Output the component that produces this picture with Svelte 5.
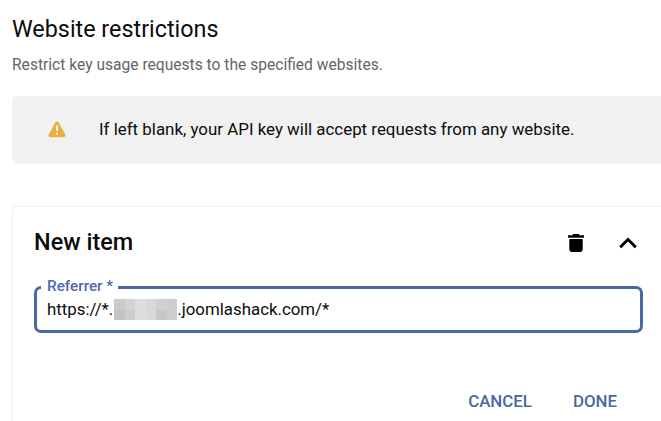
<script>
	/** @type {string[][]} */
	const mosaic = [
		['#cbcbcb', '#d3d3d3', '#dedede', '#d8d8d8', '#d0d0d0', '#cdcdcd'],
		['#c3c3c3', '#cdcdcd', '#dcdcdc', '#d9d9d9', '#c7c7c7', '#cecece']
	];
</script>

<div class="page">
	<h1>Website restrictions</h1>
	<p class="subtitle">Restrict key usage requests to the specified websites.</p>

	<div class="notice">
		<svg class="warning" viewBox="0 0 18 17" width="18" height="17">
			<path d="M7.3 1.4a2 2 0 0 1 3.4 0l6.5 11.8c.8 1.4 0 3-1.6 3H2.4c-1.6 0-2.4-1.6-1.6-3z" fill="#ebae40" />
			<path d="M8 4.5h2v5.5H8zM8 11.8h2v2H8z" fill="#fff8e8" />
		</svg>
		<span>If left blank, your API key will accept requests from any website.</span>
	</div>

	<section class="card">
		<header>
			<h2>New item</h2>
			<button class="icon-button" aria-label="Delete item">
				<svg viewBox="0 0 16 18" width="16" height="18">
					<path d="M0 1.3h4.300L5.300 0h5.400l1 1.300H16v2.500H0zM1.300 5h13.400v10.600a2.400 2.400 0 0 1-2.400 2.400H3.700a2.400 2.400 0 0 1-2.400-2.400z" />
				</svg>
			</button>
			<button class="icon-button" aria-label="Collapse item">
				<svg viewBox="0 0 18 12" width="18" height="12">
					<path d="M1.2 10.3L9 2.5l7.8 7.8" fill="none" stroke="#000" stroke-width="2.8" />
				</svg>
			</button>
		</header>

		<fieldset>
			<legend>Referrer *</legend>
			<div class="value">
				<span>https://*.</span>
				<span class="mosaic">
					{#each mosaic as row}
						{#each row as color}
							<i style:background={color}></i>
						{/each}
					{/each}
				</span>
				<span>.joomlashack.com/*</span>
			</div>
		</fieldset>

		<div class="actions">
			<button>CANCEL</button>
			<button>DONE</button>
		</div>
	</section>
</div>

<style>
	:global(body) {
		background: #fff;
		overflow: hidden;
	}

	.page {
		box-sizing: border-box;
		height: 421px;
		padding: 14px 0 0 12px;
		overflow: hidden;
		font-family: Roboto, sans-serif;
		color: #0c0c0c;
	}

	h1 {
		margin: 0;
		font-size: 23.35px;
		font-weight: 400;
		line-height: 30px;
	}

	.subtitle {
		margin: 10px 0 0;
		font-size: 15.6px;
		line-height: 22px;
		color: #666;
	}

	.notice {
		display: flex;
		align-items: center;
		height: 68px;
		margin-top: 20px;
		padding: 0 0 1px 36px;
		box-sizing: border-box;
		border-radius: 5px 0 0 5px;
		background: #f1f1f1;
		font-size: 16.9px;
		white-space: nowrap;
	}

	.notice span {
		padding-bottom: 2px;
	}

	.warning {
		margin-right: 33px;
	}

	.card {
		box-sizing: border-box;
		height: 240px;
		margin: 43px -10px 0 1px;
		padding: 19px 28px 0 21px;
		border-radius: 4px 0 0 0;
		box-shadow: 0 0 2px rgba(0, 0, 0, 0.2);
	}

	header {
		display: flex;
		align-items: center;
		height: 32px;
	}

	h2 {
		flex: 1;
		margin: 0;
		font-size: 23.45px;
		font-weight: 500;
	}

	button {
		padding: 0;
		border: 0;
		background: none;
		font: inherit;
	}

	.icon-button {
		display: flex;
		padding-top: 2px;
	}

	.icon-button + .icon-button {
		margin: 0 6px 0 35px;
	}

	fieldset {
		box-sizing: border-box;
		height: 57px;
		min-width: 0;
		margin: 18px 0 0;
		padding: 0 0 0 4px;
		border: 3px solid #4a69a4;
		border-radius: 7px;
	}

	legend {
		padding: 0 5px 3px 6px;
		font-size: 15.3px;
		font-weight: 500;
		line-height: 20px;
		color: #5069ae;
	}

	.value {
		display: flex;
		align-items: center;
		padding-left: 6px;
		height: 19px;
		font-size: 16.85px;
		white-space: nowrap;
	}

	.mosaic {
		display: grid;
		grid-template-columns: repeat(6, 10.5px);
		grid-template-rows: repeat(2, 10.5px);
		margin: 2px 0 0 1px;
	}

	.actions {
		display: flex;
		justify-content: flex-end;
		gap: 41px;
		margin: 58px 26px 0 0;
		font-size: 16.85px;
		font-weight: 500;
		line-height: 20px;
		color: #4a69a4;
	}

	.actions button {
		color: inherit;
	}
</style>
